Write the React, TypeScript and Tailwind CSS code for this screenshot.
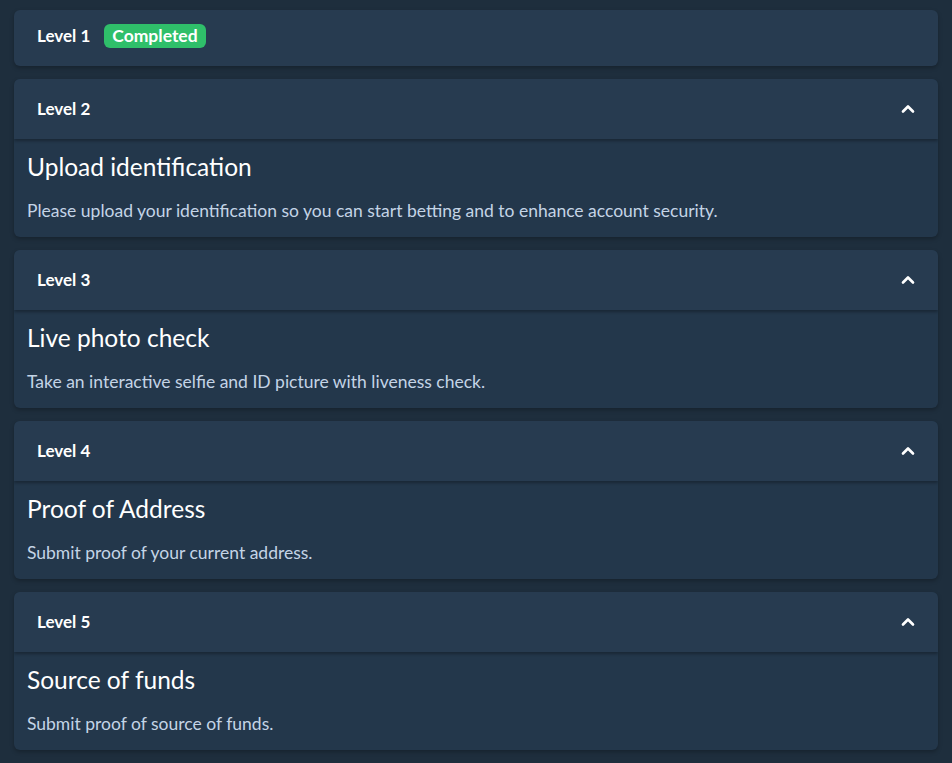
import { FiChevronUp } from "react-icons/fi";

const levels = [
  {
    level: "Level 2",
    title: "Upload identification",
    text: "Please upload your identification so you can start betting and to enhance account security.",
  },
  {
    level: "Level 3",
    title: "Live photo check",
    text: "Take an interactive selfie and ID picture with liveness check.",
  },
  {
    level: "Level 4",
    title: "Proof of Address",
    text: "Submit proof of your current address.",
  },
  {
    level: "Level 5",
    title: "Source of funds",
    text: "Submit proof of source of funds.",
  },
];

const App = () => {
  return (
    <div className="min-h-[763px] bg-[#1e2e3d] px-[14px] pt-[10px] pb-3 font-['Lato',sans-serif] flex flex-col gap-[13px]">
      <div className="h-[56px] rounded-md bg-[#273b50] shadow-[0_2px_4px_rgba(0,0,0,0.25)] flex items-center px-[23px] pb-[4px] gap-[14px]">
        <span className="text-white font-bold text-[17px]">Level 1</span>
        <span className="bg-[#2fbf6a] text-white font-bold text-[17.5px] leading-none rounded-md px-2 py-[3px]">Completed</span>
      </div>

      {levels.map((l) => (
        <div key={l.level} className="rounded-md bg-[#23374b] shadow-[0_2px_4px_rgba(0,0,0,0.25)] overflow-hidden">
          <div className="h-[60px] bg-[#273b50] flex items-center justify-between px-[23px] shadow-[0_2px_3px_rgba(0,0,0,0.3)]">
            <span className="text-white font-bold text-[17px]">{l.level}</span>
            <FiChevronUp className="text-white text-[20px] mr-[-3px]" strokeWidth={3.2} />
          </div>
          <div className="px-[13px] pt-[13px] pb-[16px]">
            <h2 className="text-white text-[24.5px] leading-[30px]">{l.title}</h2>
            <p className="mt-[19px] text-[#c4d4e6] text-[17.5px] leading-[20px]">{l.text}</p>
          </div>
        </div>
      ))}
    </div>
  );
};

export default App;
